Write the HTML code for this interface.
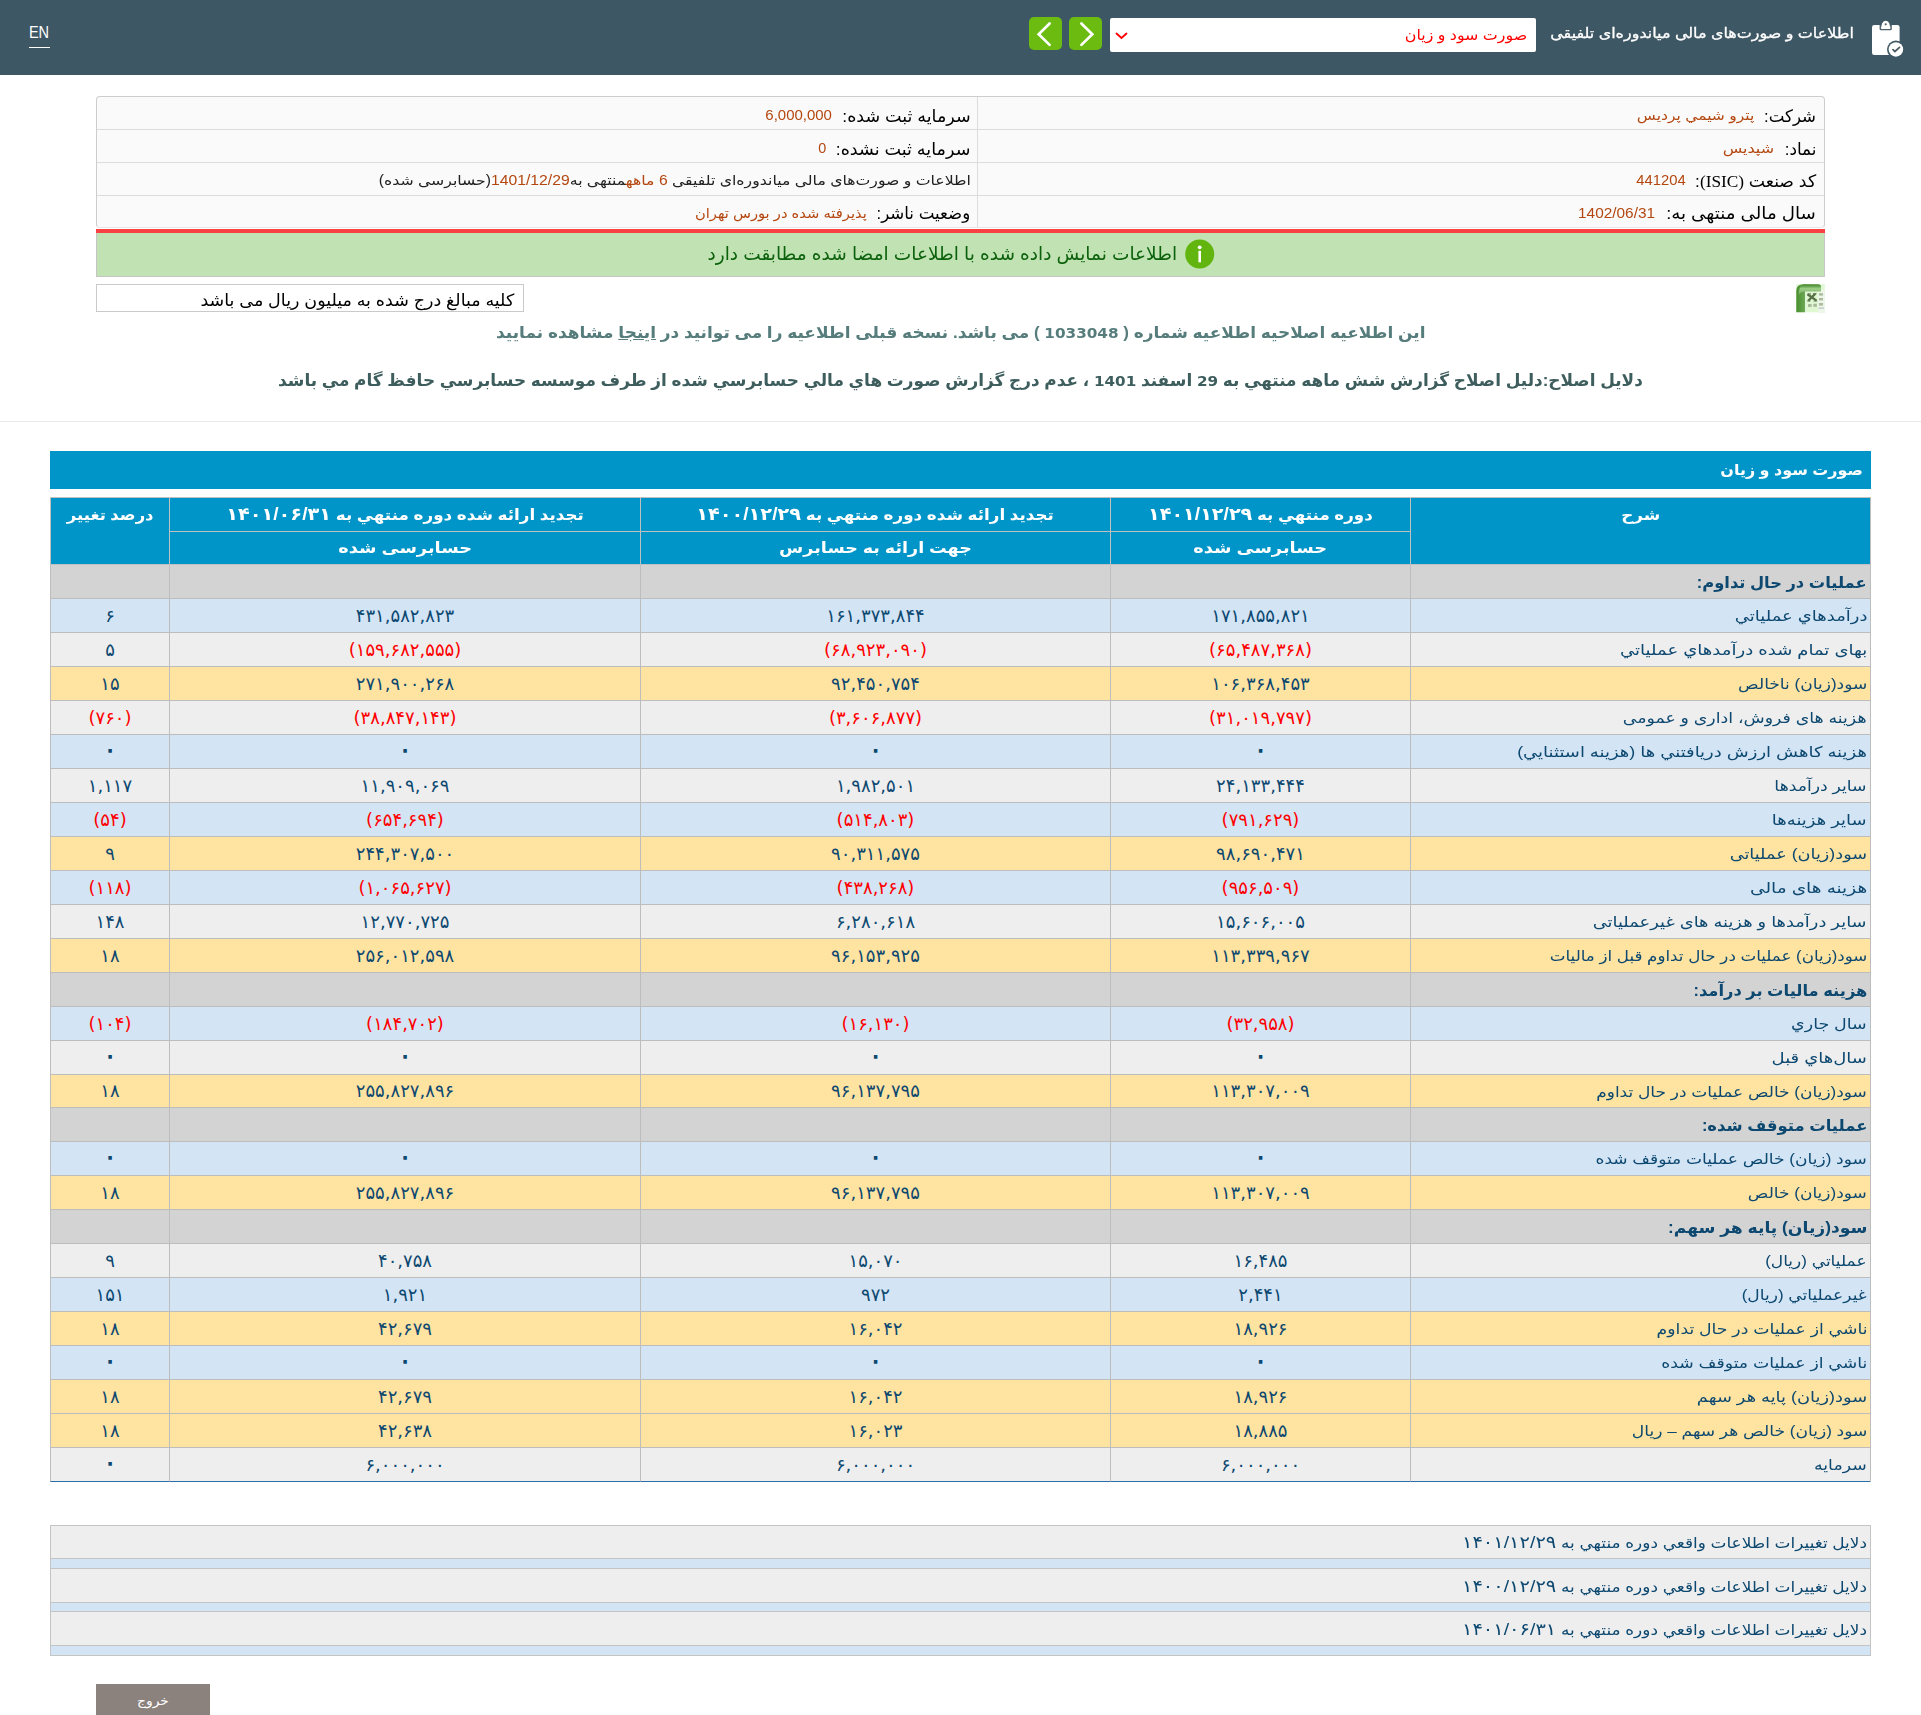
<!DOCTYPE html>
<html lang="fa" dir="rtl">
<head>
<meta charset="utf-8">
<title>صورت سود و زیان</title>
<style>
*{box-sizing:border-box;margin:0;padding:0}
html,body{width:1921px;height:1715px;overflow:hidden;background:#fff}
body{position:relative;font-family:"Liberation Sans","DejaVu Sans",sans-serif;direction:rtl;color:#000}
.abs{position:absolute}
.tx{position:absolute;white-space:nowrap;line-height:1.2;display:block}
.pb{display:inline-block;width:0;height:0}
.s{display:inline-block;transform-origin:50% 50%;white-space:nowrap}
.s.sr{transform-origin:100% 50%}
.dg{font-size:1.15em;line-height:0}
#hdr{left:0;top:0;width:1921px;height:75px;background:#3e5764}
#enu{left:29px;top:47px;width:21px;height:1px;background:#fff}
.gb{top:17px;width:33px;height:33px;background:#6bbb10;border-radius:5px}
#sel{left:1110px;top:18px;width:426px;height:34px;background:#fff;border-radius:2px}
#info{left:96px;top:96px;width:1729px;height:132px;background:#fafafa;border:1px solid #cdcdcd;border-bottom-color:#e6e6e6;border-radius:4px}
#info i{position:absolute;display:block;background:#dcdcdc}
#red{left:96px;top:229px;width:1729px;height:4px;background:#f94144}
#grnb{left:96px;top:233px;width:1729px;height:44px;background:#c1e2b3;border:1px solid #c6c6c6;border-top:0}
#inp{left:96px;top:284px;width:428px;height:28px;border:1px solid #cacaca;background:#fff}
#hr{left:0;top:421px;width:1921px;height:1px;background:#e9e9e9}
#tb{left:50px;top:451px;width:1821px;height:38px;background:#0095c8}
table{border-collapse:separate;border-spacing:0;table-layout:fixed}
#t1{left:50px;top:497px;width:1821px;border-top:1px solid #c0c0c0;border-right:1px solid #bdbdbd;color:#0c4870}
#t1 th,#t1 td{border-left:1px solid #bdbdbd;border-bottom:1px solid #bdbdbd;padding:0;text-align:center;white-space:nowrap;overflow:visible;line-height:33px;height:34px}
#t1 th{background:#0095c8;color:#fff;font-weight:bold;font-size:15.2px;border-color:#c0c0c0}
#t1 th.top{vertical-align:top}
#t1 tr.hr2 th{height:33px;line-height:32px}
#t1 td.v{direction:ltr;font-family:"DejaVu Sans",sans-serif;font-size:18px}
#t1 td.d{direction:rtl;text-align:right;padding-right:3px;font-size:14.7px}
#t1 td.n{color:#f00}
#t1 tr.h td{background:#d3d3d3;font-weight:bold}
#t1 tr.b td{background:#d3e4f5}
#t1 tr.g td{background:#eeeeee}
#t1 tr.y td{background:#ffe3a1}
#t1 tr:last-child td{border-bottom:1px solid #2a6fa8}
#t1 .s,#t2 .s{position:relative;top:1px}
#t1 tr.hr1 th .s{top:-.5px}
#t1 tr.hr2 th .s{top:-.5px}
#t1 td.v{padding-left:2px}
#t2{left:50px;top:1525px;width:1821px;border-top:1px solid #c4c4c4;border-right:1px solid #c4c4c4;color:#0c4870;font-size:14.7px}
#t2 td{border-left:1px solid #c4c4c4;border-bottom:1px solid #c4c4c4;text-align:right;padding:0 3px 0 0;white-space:nowrap;line-height:32px}
#t2 tr.a td{height:33.75px;background:#eeeeee}
#t2 tr.st td{height:9.6px;background:#d3e4f5;line-height:0;font-size:0}
#ex{left:96px;top:1684px;width:114px;height:40px;background:#8c827d}
#t1 tr.r15 td{height:33px;line-height:32px}
.ld{font-family:"DejaVu Sans",sans-serif;font-size:.9em}
#t1 td.z{-webkit-text-stroke:1.5px #0c4870;paint-order:stroke fill;line-height:30px;vertical-align:top}
#t1 tr.h td.d{font-size:15.8px}

</style>
</head>
<body>
<div id="hdr" class="abs"></div>
<div id="enu" class="abs"></div>
<div class="abs gb" style="left:1029px"><svg width="33" height="33" viewBox="0 0 33 33"><path d="M20.6 6.5 L9.7 17.2 L20.6 27.9" fill="none" stroke="#fff" stroke-width="2.7" stroke-linecap="round" stroke-linejoin="miter"/></svg></div>
<div class="abs gb" style="left:1069px"><svg width="33" height="33" viewBox="0 0 33 33"><path d="M12.4 6.5 L23.3 17.2 L12.4 27.9" fill="none" stroke="#fff" stroke-width="2.7" stroke-linecap="round" stroke-linejoin="miter"/></svg></div>
<div id="sel" class="abs"><svg class="abs" style="left:5px;top:13.8px" width="14" height="9" viewBox="0 0 14 9"><path d="M1.5 1.5 L6.5 6 L11.5 1.5" fill="none" stroke="#f00" stroke-width="1.8" stroke-linecap="round"/></svg></div>
<svg class="abs" style="left:1860px;top:12px" width="56" height="52" viewBox="0 0 56 52"><rect x="12" y="12.9" width="27.6" height="30.2" rx="2.3" fill="#fff"/><path d="M19.6 12.9 h12.2 v4.2 q0 1.2 -1.2 1.2 h-9.8 q-1.2 0 -1.2 -1.2z" fill="#4d616c"/><path d="M20.9 15.9 Q20.7 17 21.9 17 H29.5 Q30.7 17 30.5 15.9 L29.3 11.6 Q28.4 8.8 25.7 8.8 Q23 8.8 22.1 11.6 Z" fill="#fff"/><circle cx="25.7" cy="12.3" r="1.15" fill="#5b6970"/><circle cx="35.9" cy="37.45" r="8.9" fill="#3e5764"/><circle cx="35.9" cy="37.45" r="7.25" fill="#fff"/><path d="M33 37.7 L34.9 39.5 L39.5 35.4" fill="none" stroke="#4d5c64" stroke-width="1.8" stroke-linecap="round" stroke-linejoin="round"/></svg>
<div id="info" class="abs">
<i style="left:0;top:32px;width:1727px;height:1px"></i><i style="left:0;top:65px;width:1727px;height:1px"></i><i style="left:0;top:98px;width:1727px;height:1px"></i><i style="left:880px;top:0;width:1px;height:130px"></i>
</div>
<div id="red" class="abs"></div>
<div id="grnb" class="abs"></div>
<svg class="abs" style="left:1185px;top:239px" width="30" height="30" viewBox="0 0 30 30"><circle cx="14.7" cy="15" r="14.5" fill="#62b50e"/><circle cx="14.7" cy="8.3" r="1.9" fill="#fff"/><rect x="13.4" y="11.8" width="2.6" height="11.5" fill="#fff"/></svg>
<svg class="abs" style="left:1794px;top:282px" width="34" height="33" viewBox="0 0 34 33"><defs><linearGradient id="xg1" x1="0" y1="0" x2="1" y2="0"><stop offset="0" stop-color="#47902c"/><stop offset="0.45" stop-color="#79ad63"/><stop offset="1" stop-color="#a9c99b"/></linearGradient><linearGradient id="xg2" x1="0" y1="0" x2="0" y2="1"><stop offset="0" stop-color="#3f8426"/><stop offset="0.4" stop-color="#9ccf88"/><stop offset="1" stop-color="#7aa564"/></linearGradient><filter id="xb" x="-10%" y="-10%" width="120%" height="120%"><feGaussianBlur stdDeviation="0.55"/></filter></defs><g filter="url(#xb)"><rect x="2.3" y="2.3" width="28.5" height="28" fill="#e0f7d4"/><rect x="24" y="8" width="7" height="23" fill="#eef6ea"/><path d="M2.3 30.3 V9 Q2.3 2.3 9 2.3 H25 Q27 2.3 27 5 V9 H11 V30.3 Z" fill="url(#xg1)"/><path d="M9 2.5 H25 Q27 2.5 27 5 V9.6 H10.5 Q7 9.6 5 13 Q4 6 9 2.5Z" fill="url(#xg2)"/><path d="M13.5 12.2 L22.5 18.6 M14.2 18.8 L21.4 11.6" stroke="#586f47" stroke-width="2.3" fill="none"/><path d="M13.5 11.9 h3.6 M19.2 11.7 h3.4 M13.2 19 h3.3 M19.6 19 h3.6" stroke="#64794f" stroke-width="1"/><g fill="#a9bb9c"><rect x="25" y="11.2" width="4" height="2.4"/><rect x="25" y="16" width="4" height="2.4"/><rect x="25" y="21" width="4" height="2.6"/><rect x="14" y="22" width="3.6" height="3"/><rect x="19.3" y="21.8" width="3.6" height="3"/></g><rect x="24.5" y="25.6" width="5.5" height="1" fill="#aeb6b8"/></g></svg>
<div id="inp" class="abs"></div>
<div id="hr" class="abs"></div>
<div id="tb" class="abs"></div>
<div id="ex" class="abs"></div>
<span id="en" class="tx" style="top:23.1px;font-size:17px;left:39.1px;transform:translateX(-50%) scaleX(0.8550);color:#fff;direction:ltr">EN</span>
<span id="ttl" class="tx" style="top:25.2px;font-size:14.2px;right:67.0px;transform-origin:100% 50%;transform:scaleX(1.1250);color:#fff;-webkit-text-stroke:.3px #fff">اطلاعات و صورت‌های مالی میاندوره‌ای تلفیقی</span>
<span id="selt" class="tx" style="top:26.6px;font-size:14.7px;right:393.7px;transform-origin:100% 50%;transform:scaleX(1.0821);color:#f00">صورت سود و زیان</span>
<span id="l1" class="tx" style="top:105.5px;font-size:17.3px;right:104.6px;transform-origin:100% 50%;transform:scaleX(0.9608);">شرکت:</span>
<span id="l2" class="tx" style="top:138.6px;font-size:17.3px;right:104.6px;transform-origin:100% 50%;transform:scaleX(0.9792);">نماد:</span>
<span id="l3" class="tx" style="top:170.6px;font-size:17.3px;right:104.6px;transform-origin:100% 50%;transform:scaleX(0.9991);">کد صنعت <span style="font-family:'Liberation Serif',serif;font-size:1.0em">(ISIC)</span>:</span>
<span id="l4" class="tx" style="top:203.3px;font-size:17.3px;right:104.7px;transform-origin:100% 50%;transform:scaleX(1.0555);">سال مالی منتهی به:</span>
<span id="v1" class="tx" style="top:108.4px;font-size:13.7px;right:167.1px;transform-origin:100% 50%;transform:scaleX(1.1368);color:#b4470f">پترو شيمي پرديس</span>
<span id="v2" class="tx" style="top:141.4px;font-size:13.7px;right:147.4px;transform-origin:100% 50%;transform:scaleX(1.1669);color:#b4470f">شپديس</span>
<span id="v3" class="tx" style="top:172.0px;font-size:14.6px;right:235.7px;transform-origin:100% 50%;transform:scaleX(1.0143);color:#b4470f;direction:ltr">441204</span>
<span id="v4" class="tx" style="top:205.0px;font-size:14.6px;right:265.5px;transform-origin:100% 50%;transform:scaleX(1.0541);color:#b4470f;direction:ltr">1402/06/31</span>
<span id="l5" class="tx" style="top:105.5px;font-size:17.3px;right:950.3px;transform-origin:100% 50%;transform:scaleX(1.0132);">سرمایه ثبت شده:</span>
<span id="l6" class="tx" style="top:138.6px;font-size:17.3px;right:950.3px;transform-origin:100% 50%;transform:scaleX(1.0168);">سرمایه ثبت نشده:</span>
<span id="l7" class="tx" style="top:173.0px;font-size:13.8px;right:950.3px;transform-origin:100% 50%;transform:scaleX(1.1390);color:#222">اطلاعات و صورت‌های مالی میاندوره‌ای تلفیقی <span style="color:#b4470f">6 ماهه</span>منتهی به<span style="color:#b4470f">1401/12/29</span>(حسابرسی شده)</span>
<span id="l8" class="tx" style="top:203.3px;font-size:17.3px;right:950.3px;transform-origin:100% 50%;transform:scaleX(0.9637);">وضعیت ناشر:</span>
<span id="v5" class="tx" style="top:107.0px;font-size:14.6px;right:1088.9px;transform-origin:100% 50%;transform:scaleX(1.0256);color:#b4470f;direction:ltr">6,000,000</span>
<span id="v6" class="tx" style="top:140.0px;font-size:14.6px;right:1094.7px;transform-origin:100% 50%;transform:scaleX(0.9846);color:#b4470f;direction:ltr">0</span>
<span id="v8" class="tx" style="top:206.2px;font-size:13.7px;right:1054.4px;transform-origin:100% 50%;transform:scaleX(1.0754);color:#b4470f">پذيرفته شده در بورس تهران</span>
<span id="grn" class="tx" style="top:243.3px;font-size:18.5px;right:743.7px;transform-origin:100% 50%;transform:scaleX(1.0010);color:#0c620c">اطلاعات نمایش داده شده با اطلاعات امضا شده مطابقت دارد</span>
<span id="inpt" class="tx" style="top:290.8px;font-size:16.8px;right:1406.6px;transform-origin:100% 50%;transform:scaleX(1.0417);color:#000">کلیه مبالغ درج شده به میلیون ریال می باشد</span>
<span id="m1" class="tx" style="top:322.8px;font-size:16.4px;right:495.9px;transform-origin:100% 50%;transform:scaleX(1.0345);color:#567c7c;font-weight:bold">این اطلاعیه اصلاحیه اطلاعیه شماره ( <span class="ld">1033048</span> ) می باشد. نسخه قبلی اطلاعیه را می توانید در <u>اینجا</u> مشاهده نمایید</span>
<span id="m2" class="tx" style="top:371.3px;font-size:16.6px;right:278.2px;transform-origin:100% 50%;transform:scaleX(1.0186);color:#3e5d5d;font-weight:bold">دلایل اصلاح:دليل اصلاح گزارش شش ماهه منتهي به <span class="ld">29</span> اسفند <span class="ld">1401</span> ، عدم درج گزارش صورت هاي مالي حسابرسي شده از طرف موسسه حسابرسي حافظ گام مي باشد</span>
<span id="tbt" class="tx" style="top:461.2px;font-size:15px;right:57.8px;transform-origin:100% 50%;transform:scaleX(1.0649);color:#fff;font-weight:bold">صورت سود و زیان</span>
<span id="ext" class="tx" style="top:1694.3px;font-size:12.5px;left:152.9px;transform:translateX(-50%) scaleX(1.1102);color:#fff">خروج</span>
<table id="t1" class="abs">
<colgroup><col style="width:460px"><col style="width:300px"><col style="width:470px"><col style="width:471px"><col style="width:119px"></colgroup>
<tr class="hr1"><th rowspan="2" class="top"><span id="h_sharh" class="s" style="transform:scaleX(1.1034)">شرح</span></th><th><span id="h_c1" class="s" style="transform:scaleX(1.0975)">دوره منتهي به <span class="dg">۱۴۰۱/۱۲/۲۹</span></span></th><th><span id="h_c2" class="s" style="transform:scaleX(1.1039)">تجديد ارائه شده دوره منتهي به <span class="dg">۱۴۰۰/۱۲/۲۹</span></span></th><th><span id="h_c3" class="s" style="transform:scaleX(1.1039)">تجديد ارائه شده دوره منتهي به <span class="dg">۱۴۰۱/۰۶/۳۱</span></span></th><th rowspan="2" class="top"><span id="h_pct" class="s" style="transform:scaleX(1.0793)">درصد تغيير</span></th></tr>
<tr class="hr2"><th><span id="h_s1" class="s" style="transform:scaleX(1.1682)">حسابرسی شده</span></th><th><span id="h_s2" class="s" style="transform:scaleX(1.1545)">جهت ارائه به حسابرس</span></th><th><span id="h_s3" class="s" style="transform:scaleX(1.1682)">حسابرسی شده</span></th></tr>
<tr class="h"><td class="d"><span id="r0" class="s sr" style="transform:scaleX(1.0315)">عمليات در حال تداوم:</span></td><td></td><td></td><td></td><td></td></tr>
<tr class="b"><td class="d"><span id="r1" class="s sr" style="transform:scaleX(1.2226)">درآمدهاي عملياتي</span></td><td class="v">۱۷۱,۸۵۵,۸۲۱</td><td class="v">۱۶۱,۳۷۳,۸۴۴</td><td class="v">۴۳۱,۵۸۲,۸۲۳</td><td class="v">۶</td></tr>
<tr class="g"><td class="d"><span id="r2" class="s sr" style="transform:scaleX(1.2286)">بهاى تمام شده درآمدهاي عملياتي</span></td><td class="v n">(۶۵,۴۸۷,۳۶۸)</td><td class="v n">(۶۸,۹۲۳,۰۹۰)</td><td class="v n">(۱۵۹,۶۸۲,۵۵۵)</td><td class="v">۵</td></tr>
<tr class="y"><td class="d"><span id="r3" class="s sr" style="transform:scaleX(1.1614)">سود(زيان) ناخالص</span></td><td class="v">۱۰۶,۳۶۸,۴۵۳</td><td class="v">۹۲,۴۵۰,۷۵۴</td><td class="v">۲۷۱,۹۰۰,۲۶۸</td><td class="v">۱۵</td></tr>
<tr class="g"><td class="d"><span id="r4" class="s sr" style="transform:scaleX(1.1806)">هزينه هاى فروش، ادارى و عمومى</span></td><td class="v n">(۳۱,۰۱۹,۷۹۷)</td><td class="v n">(۳,۶۰۶,۸۷۷)</td><td class="v n">(۳۸,۸۴۷,۱۴۳)</td><td class="v n">(۷۶۰)</td></tr>
<tr class="b"><td class="d"><span id="r5" class="s sr" style="transform:scaleX(1.2234)">هزينه كاهش ارزش دريافتني ها (هزينه استثنايي)</span></td><td class="v z">۰</td><td class="v z">۰</td><td class="v z">۰</td><td class="v z">۰</td></tr>
<tr class="g"><td class="d"><span id="r6" class="s sr" style="transform:scaleX(1.1734)">ساير درآمدها</span></td><td class="v">۲۴,۱۳۳,۴۴۴</td><td class="v">۱,۹۸۲,۵۰۱</td><td class="v">۱۱,۹۰۹,۰۶۹</td><td class="v">۱,۱۱۷</td></tr>
<tr class="b"><td class="d"><span id="r7" class="s sr" style="transform:scaleX(1.2214)">ساير هزينه‌ها</span></td><td class="v n">(۷۹۱,۶۲۹)</td><td class="v n">(۵۱۴,۸۰۳)</td><td class="v n">(۶۵۴,۶۹۴)</td><td class="v n">(۵۴)</td></tr>
<tr class="y"><td class="d"><span id="r8" class="s sr" style="transform:scaleX(1.2043)">سود(زيان) عملياتى</span></td><td class="v">۹۸,۶۹۰,۴۷۱</td><td class="v">۹۰,۳۱۱,۵۷۵</td><td class="v">۲۴۴,۳۰۷,۵۰۰</td><td class="v">۹</td></tr>
<tr class="b"><td class="d"><span id="r9" class="s sr" style="transform:scaleX(1.2577)">هزينه هاى مالى</span></td><td class="v n">(۹۵۶,۵۰۹)</td><td class="v n">(۴۳۸,۲۶۸)</td><td class="v n">(۱,۰۶۵,۶۲۷)</td><td class="v n">(۱۱۸)</td></tr>
<tr class="g"><td class="d"><span id="r10" class="s sr" style="transform:scaleX(1.2141)">ساير درآمدها و هزينه هاى غيرعملياتى</span></td><td class="v">۱۵,۶۰۶,۰۰۵</td><td class="v">۶,۲۸۰,۶۱۸</td><td class="v">۱۲,۷۷۰,۷۲۵</td><td class="v">۱۴۸</td></tr>
<tr class="y"><td class="d"><span id="r11" class="s sr" style="transform:scaleX(1.1367)">سود(زيان) عمليات در حال تداوم قبل از ماليات</span></td><td class="v">۱۱۳,۳۳۹,۹۶۷</td><td class="v">۹۶,۱۵۳,۹۲۵</td><td class="v">۲۵۶,۰۱۲,۵۹۸</td><td class="v">۱۸</td></tr>
<tr class="h"><td class="d"><span id="r12" class="s sr" style="transform:scaleX(1.0330)">هزينه ماليات بر درآمد:</span></td><td></td><td></td><td></td><td></td></tr>
<tr class="b"><td class="d"><span id="r13" class="s sr" style="transform:scaleX(1.1870)">سال جاري</span></td><td class="v n">(۳۲,۹۵۸)</td><td class="v n">(۱۶,۱۳۰)</td><td class="v n">(۱۸۴,۷۰۲)</td><td class="v n">(۱۰۴)</td></tr>
<tr class="g"><td class="d"><span id="r14" class="s sr" style="transform:scaleX(1.2245)">سال‌هاي قبل</span></td><td class="v z">۰</td><td class="v z">۰</td><td class="v z">۰</td><td class="v z">۰</td></tr>
<tr class="y r15"><td class="d"><span id="r15" class="s sr" style="transform:scaleX(1.1575)">سود(زيان) خالص عمليات در حال تداوم</span></td><td class="v">۱۱۳,۳۰۷,۰۰۹</td><td class="v">۹۶,۱۳۷,۷۹۵</td><td class="v">۲۵۵,۸۲۷,۸۹۶</td><td class="v">۱۸</td></tr>
<tr class="h"><td class="d"><span id="r16" class="s sr" style="transform:scaleX(1.0382)">عمليات متوقف شده:</span></td><td></td><td></td><td></td><td></td></tr>
<tr class="b"><td class="d"><span id="r17" class="s sr" style="transform:scaleX(1.1606)">سود (زيان) خالص عمليات متوقف شده</span></td><td class="v z">۰</td><td class="v z">۰</td><td class="v z">۰</td><td class="v z">۰</td></tr>
<tr class="y"><td class="d"><span id="r18" class="s sr" style="transform:scaleX(1.1570)">سود(زيان) خالص</span></td><td class="v">۱۱۳,۳۰۷,۰۰۹</td><td class="v">۹۶,۱۳۷,۷۹۵</td><td class="v">۲۵۵,۸۲۷,۸۹۶</td><td class="v">۱۸</td></tr>
<tr class="h"><td class="d"><span id="r19" class="s sr" style="transform:scaleX(1.0875)">سود(زيان) پايه هر سهم:</span></td><td></td><td></td><td></td><td></td></tr>
<tr class="g"><td class="d"><span id="r20" class="s sr" style="transform:scaleX(1.1582)">عملياتي (ريال)</span></td><td class="v">۱۶,۴۸۵</td><td class="v">۱۵,۰۷۰</td><td class="v">۴۰,۷۵۸</td><td class="v">۹</td></tr>
<tr class="b"><td class="d"><span id="r21" class="s sr" style="transform:scaleX(1.1609)">غيرعملياتي (ريال)</span></td><td class="v">۲,۴۴۱</td><td class="v">۹۷۲</td><td class="v">۱,۹۲۱</td><td class="v">۱۵۱</td></tr>
<tr class="y"><td class="d"><span id="r22" class="s sr" style="transform:scaleX(1.1751)">ناشي از عمليات در حال تداوم</span></td><td class="v">۱۸,۹۲۶</td><td class="v">۱۶,۰۴۲</td><td class="v">۴۲,۶۷۹</td><td class="v">۱۸</td></tr>
<tr class="b"><td class="d"><span id="r23" class="s sr" style="transform:scaleX(1.1757)">ناشي از عمليات متوقف شده</span></td><td class="v z">۰</td><td class="v z">۰</td><td class="v z">۰</td><td class="v z">۰</td></tr>
<tr class="y"><td class="d"><span id="r24" class="s sr" style="transform:scaleX(1.2152)">سود(زيان) پايه هر سهم</span></td><td class="v">۱۸,۹۲۶</td><td class="v">۱۶,۰۴۲</td><td class="v">۴۲,۶۷۹</td><td class="v">۱۸</td></tr>
<tr class="y"><td class="d"><span id="r25" class="s sr" style="transform:scaleX(1.1637)">سود (زيان) خالص هر سهم – ريال</span></td><td class="v">۱۸,۸۸۵</td><td class="v">۱۶,۰۲۳</td><td class="v">۴۲,۶۳۸</td><td class="v">۱۸</td></tr>
<tr class="g"><td class="d"><span id="r26" class="s sr" style="transform:scaleX(1.1785)">سرمايه</span></td><td class="v">۶,۰۰۰,۰۰۰</td><td class="v">۶,۰۰۰,۰۰۰</td><td class="v">۶,۰۰۰,۰۰۰</td><td class="v z">۰</td></tr>
</table>
<table id="t2" class="abs">
<tr class="a"><td style="height:33px"><span id="t2a" class="s sr" style="transform:scaleX(1.1507)">دلایل تغييرات اطلاعات واقعي دوره منتهي به <span class="dg">۱۴۰۱/۱۲/۲۹</span></span></td></tr><tr class="st"><td style="height:10px"></td></tr>
<tr class="a"><td style="height:34px"><span id="t2b" class="s sr" style="transform:scaleX(1.1507)">دلایل تغييرات اطلاعات واقعي دوره منتهي به <span class="dg">۱۴۰۰/۱۲/۲۹</span></span></td></tr><tr class="st"><td style="height:9px"></td></tr>
<tr class="a"><td style="height:34px"><span id="t2c" class="s sr" style="transform:scaleX(1.1507)">دلایل تغييرات اطلاعات واقعي دوره منتهي به <span class="dg">۱۴۰۱/۰۶/۳۱</span></span></td></tr><tr class="st"><td style="height:10px"></td></tr>
</table>
</body>
</html>
